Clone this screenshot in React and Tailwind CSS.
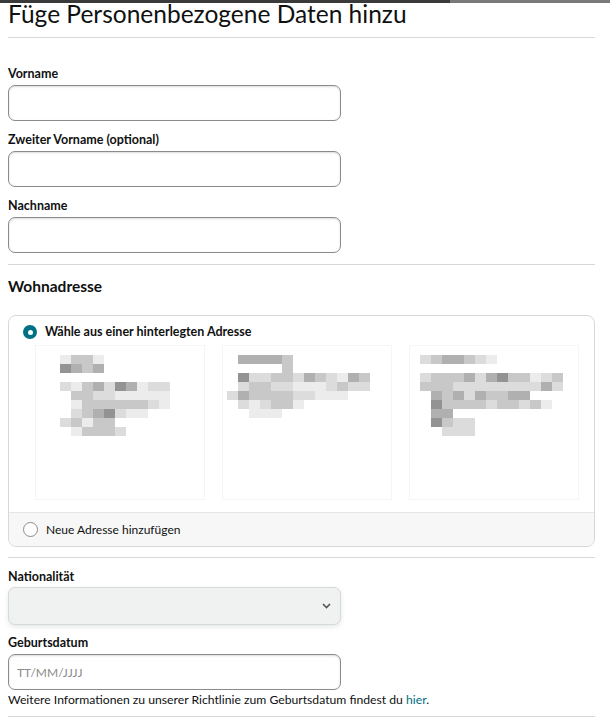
import React from 'react';

const shades = {
  '0': 'bg-transparent',
  '1': 'bg-[#ececec]',
  '2': 'bg-[#dcdcdc]',
  '3': 'bg-[#c8c8c8]',
  '4': 'bg-[#b0b0b0]',
  '5': 'bg-[#939393]',
};

// pixelated (redacted) address text
const addresses = [
  {
    pad: 'pl-[24px]',
    rows: [
      '1331',
      '5434',
      '0000000',
      '2134254122',
      '0332211111',
      '0133333321',
      '0234521100',
      '231330',
      '013332',
    ],
  },
  {
    pad: 'pl-[4px]',
    rows: [
      '04444300',
      '00000300',
      '0522332432143',
      '0233221112322',
      '24333322111',
      '0212331',
      '00111',
    ],
  },
  {
    pad: 'pl-[10px]',
    rows: [
      '2344321',
      '0000',
      '2333424533123',
      '3332222222242',
      '0434243344',
      '053333233231',
      '044',
      '05322',
      '00222',
    ],
  },
];

const Redacted = ({ rows }) => (
  <div className="flex flex-col">
    {rows.map((row, i) => (
      <div key={i} className="flex">
        {row.split('').map((c, j) => (
          <div key={j} className={`h-[9px] w-[11px] ${shades[c]}`} />
        ))}
      </div>
    ))}
  </div>
);

const Field = ({ label, placeholder, className = '' }) => (
  <div className={`flex flex-col ${className}`}>
    <label className="mb-[3px] text-[12.5px] font-bold leading-[16px] text-[#0f1111]">{label}</label>
    <input
      placeholder={placeholder}
      className="h-[36px] w-[333px] rounded-[7px] border border-[#888c8c] bg-white px-[8px] text-[12px] text-[#0f1111] placeholder:text-[#8b8b8b] shadow-[inset_0_1px_2px_rgba(15,17,17,0.15)]"
    />
  </div>
);

export default function App() {
  return (
    <div className="min-h-screen bg-white text-[#0f1111]" style={{ fontFamily: 'Lato, "Noto Sans", Arial, sans-serif' }}>
      <div className="flex h-[3px]">
        <div className="w-[450px] bg-[#3a3a3a]" />
        <div className="flex-1 bg-[#7a7a7a]" />
      </div>
      <div className="px-[8px] pr-[15px]">
        <h1 className="-mt-[1px] text-[24.5px] font-normal leading-[24px]">Füge Personenbezogene Daten hinzu</h1>
        <div className="mt-[11px] border-t border-[#d5d9d9]" />

        <div className="mt-[28px] flex flex-col gap-[11px]">
          <Field label="Vorname" />
          <Field label="Zweiter Vorname (optional)" />
          <Field label="Nachname" />
        </div>

        <div className="mt-[11px] border-t border-[#d5d9d9]" />

        <h2 className="mt-[11px] text-[15.5px] font-bold leading-[20px]">Wohnadresse</h2>

        <div className="mt-[19px] overflow-hidden rounded-[8px] border border-[#d5d9d9]">
          <div className="px-[14px] pt-[8px] pb-[12px]">
            <div className="flex items-center gap-[8px]">
              <span className="flex h-[14px] w-[14px] items-center justify-center rounded-full bg-[#007185]">
                <span className="h-[5px] w-[5px] rounded-full bg-white" />
              </span>
              <span className="text-[12.5px] font-bold leading-[16px]">Wähle aus einer hinterlegten Adresse</span>
            </div>
            <div className="mt-[5px] flex gap-[17px] pl-[12px]">
              {addresses.map((a, i) => (
                <div
                  key={i}
                  className={`h-[155px] w-[170px] border border-[#f5f5f5] pt-[9px] blur-[0.5px] ${a.pad}`}
                >
                  <Redacted rows={a.rows} />
                </div>
              ))}
            </div>
          </div>
          <div className="flex items-center gap-[8px] border-t border-[#e3e6e6] bg-[#f7f7f7] px-[14px] py-[8px]">
            <span className="h-[15px] w-[15px] rounded-full border border-[#888c8c] bg-white" />
            <span className="text-[12px] leading-[17px]">Neue Adresse hinzufügen</span>
          </div>
        </div>

        <div className="mt-[10px] border-t border-[#d5d9d9]" />

        <div className="mt-[11px] flex flex-col">
          <label className="mb-[2px] text-[12.5px] font-bold leading-[16px]">Nationalität</label>
          <div className="flex h-[38px] w-[333px] items-center justify-end rounded-[7px] border border-[#d5d9d9] bg-[#f0f2f2] pr-[9px] shadow-[0_2px_5px_rgba(213,217,217,0.6)]">
            <svg width="9" height="6" viewBox="0 0 9 6" fill="none">
              <path d="M1 1l3.5 3.5L8 1" stroke="#555" strokeWidth="1.6" />
            </svg>
          </div>
        </div>

        <Field className="mt-[10px]" label="Geburtsdatum" placeholder="TT/MM/JJJJ" />
        <p className="mt-[2px] text-[12.2px] leading-[16px]">
          Weitere Informationen zu unserer Richtlinie zum Geburtsdatum findest du{' '}
          <a className="text-[#007185]">hier</a>.
        </p>

        <div className="mt-[8px] border-t border-[#d5d9d9]" />
      </div>
    </div>
  );
}
